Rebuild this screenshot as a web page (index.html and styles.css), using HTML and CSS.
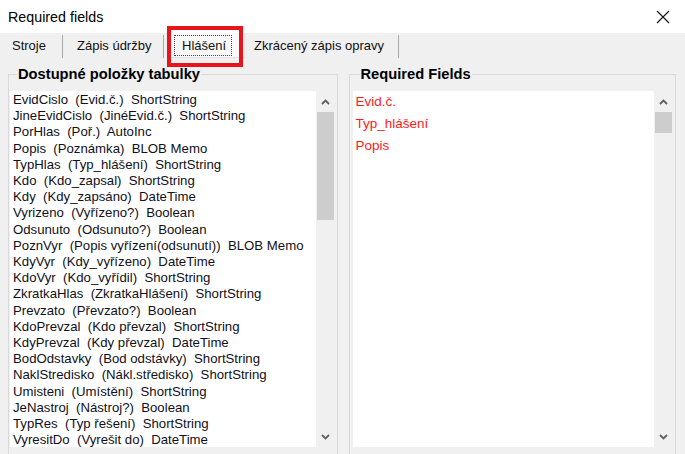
FILE: index.html
```html
<!DOCTYPE html>
<html>
<head>
<meta charset="utf-8">
<link rel="stylesheet" href="styles.css">
</head>
<body>
<div class="window">
  <div class="titlebar">
    <span class="title">Required fields</span>
    <svg class="close" width="14" height="14" viewBox="0 0 14 14"><path d="M1 1 L13 13 M13 1 L1 13" stroke="#111" stroke-width="1.1" fill="none"/></svg>
  </div>
  <div class="tabs">
    <div class="tab t1">Stroje</div>
    <div class="sep"></div>
    <div class="tab t2">Zápis údržby</div>
    <div class="sep"></div>
    <div class="tab t3 active"><span class="focus">Hlášení</span></div>
    <div class="tab t4">Zkrácený zápis opravy</div>
    <div class="sep"></div>
    <div class="mark"></div>
  </div>
  <div class="content">
    <fieldset class="group left">
      <legend>Dostupné položky tabulky</legend>
      <div class="listbox">
        <ul class="items">
          <li>EvidCislo&nbsp; (Evid.č.)&nbsp; ShortString</li>
          <li>JineEvidCislo&nbsp; (JinéEvid.č.)&nbsp; ShortString</li>
          <li>PorHlas&nbsp; (Poř.)&nbsp; AutoInc</li>
          <li>Popis&nbsp; (Poznámka)&nbsp; BLOB Memo</li>
          <li>TypHlas&nbsp; (Typ_hlášení)&nbsp; ShortString</li>
          <li>Kdo&nbsp; (Kdo_zapsal)&nbsp; ShortString</li>
          <li>Kdy&nbsp; (Kdy_zapsáno)&nbsp; DateTime</li>
          <li>Vyrizeno&nbsp; (Vyřízeno?)&nbsp; Boolean</li>
          <li>Odsunuto&nbsp; (Odsunuto?)&nbsp; Boolean</li>
          <li>PoznVyr&nbsp; (Popis vyřízení(odsunutí))&nbsp; BLOB Memo</li>
          <li>KdyVyr&nbsp; (Kdy_vyřízeno)&nbsp; DateTime</li>
          <li>KdoVyr&nbsp; (Kdo_vyřídil)&nbsp; ShortString</li>
          <li>ZkratkaHlas&nbsp; (ZkratkaHlášení)&nbsp; ShortString</li>
          <li>Prevzato&nbsp; (Převzato?)&nbsp; Boolean</li>
          <li>KdoPrevzal&nbsp; (Kdo převzal)&nbsp; ShortString</li>
          <li>KdyPrevzal&nbsp; (Kdy převzal)&nbsp; DateTime</li>
          <li>BodOdstavky&nbsp; (Bod odstávky)&nbsp; ShortString</li>
          <li>NaklStredisko&nbsp; (Nákl.středisko)&nbsp; ShortString</li>
          <li>Umisteni&nbsp; (Umístění)&nbsp; ShortString</li>
          <li>JeNastroj&nbsp; (Nástroj?)&nbsp; Boolean</li>
          <li>TypRes&nbsp; (Typ řešení)&nbsp; ShortString</li>
          <li>VyresitDo&nbsp; (Vyrešit do)&nbsp; DateTime</li>
        </ul>
        <div class="scrollbar">
          <svg class="arrow" width="9" height="6" viewBox="0 0 9 6"><path d="M1 5 L4.5 1.5 L8 5" stroke="#606060" stroke-width="1.8" fill="none"/></svg>
          <div class="thumb big"></div>
          <div class="track"></div>
          <svg class="arrow" width="9" height="6" viewBox="0 0 9 6"><path d="M1 1 L4.5 4.5 L8 1" stroke="#606060" stroke-width="1.8" fill="none"/></svg>
        </div>
      </div>
    </fieldset>
    <fieldset class="group right">
      <legend>Required Fields</legend>
      <div class="listbox">
        <ul class="items req">
          <li>Evid.č.</li>
          <li>Typ_hlášení</li>
          <li>Popis</li>
        </ul>
        <div class="scrollbar">
          <svg class="arrow" width="9" height="6" viewBox="0 0 9 6"><path d="M1 5 L4.5 1.5 L8 5" stroke="#606060" stroke-width="1.8" fill="none"/></svg>
          <div class="thumb small"></div>
          <div class="track"></div>
          <svg class="arrow" width="9" height="6" viewBox="0 0 9 6"><path d="M1 1 L4.5 4.5 L8 1" stroke="#606060" stroke-width="1.8" fill="none"/></svg>
        </div>
      </div>
    </fieldset>
  </div>
</div>
</body>
</html>
```
FILE: styles.css
```css
* { box-sizing: border-box; }
html, body { margin: 0; padding: 0; }
body {
  width: 685px;
  height: 454px;
  overflow: hidden;
  font-family: "Liberation Sans", Arial, sans-serif;
  color: #111;
}
.window {
  width: 685px;
  height: 454px;
  background: #f0f0f0;
  display: flex;
  flex-direction: column;
  overflow: hidden;
}
.titlebar {
  height: 33px;
  flex: none;
  background: #fff;
  display: flex;
  align-items: center;
  justify-content: space-between;
  padding: 0 15px 0 8px;
}
.title { font-size: 14.3px; color: #000; }
.close { display: block; }
.tabs {
  position: relative;
  height: 25px;
  flex: none;
  display: flex;
  align-items: stretch;
  font-size: 13px;
}
.tab {
  display: flex;
  align-items: center;
  color: #111;
  white-space: nowrap;
  flex: none;
}
.t1 { width: 62px; padding-left: 12px; }
.t2 { width: 100px; padding-left: 14px; }
.t3 { margin-left: 6px; width: 75px; padding: 1px 0 1px 3px; background: #f9f9f9; border: 1px solid #e3e3e3; border-top: none; }
.focus { border: 1px dotted #444; padding: 2px 5px 2px 7px; }
.t4 { width: 153px; padding-left: 9px; }
.sep { width: 1px; background: #a9a9a9; margin: 2px 0 0; flex: none; }
.mark {
  position: absolute;
  left: 167px;
  top: -7px;
  width: 76px;
  height: 41px;
  border: 4px solid #e8141c;
}
.content {
  flex: 1;
  display: flex;
  gap: 11px;
  padding: 8px 9px 0 8px;
}
.group {
  margin: 0;
  border: 1px solid #d9d9d9;
  padding: 8px 3px 1px 3px;
  min-width: 0;
  height: 396px;
}
.group legend {
  font-weight: bold;
  font-size: 14.7px;
  color: #000;
  padding: 0 1px;
  margin-left: 7px;
  line-height: 17px;
}
.left { width: 330px; padding-left: 1px; }
.right { width: 328px; }
.listbox {
  display: flex;
  height: 356px;
  background: #fff;
}
.items {
  list-style: none;
  margin: 0;
  padding: 1px 0 0 3px;
  flex: 1;
  font-size: 13.2px;
  line-height: 16.2px;
  white-space: nowrap;
  overflow: hidden;
  color: #101020;
}
.items.req {
  color: #ff1a1a;
  font-size: 13.5px;
  line-height: 22px;
  padding-top: 0;
}
.scrollbar {
  width: 18px;
  flex: none;
  background: #f0f0f0;
  display: flex;
  flex-direction: column;
  align-items: center;
  padding: 8px 0 7px 1px;
}
.arrow { display: block; flex: none; }
.thumb {
  width: 17px;
  margin-top: 7px;
  background: #cdcdcd;
  flex: none;
}
.thumb.big { height: 108px; }
.thumb.small { height: 21px; }
.track { flex: 1; }
```
